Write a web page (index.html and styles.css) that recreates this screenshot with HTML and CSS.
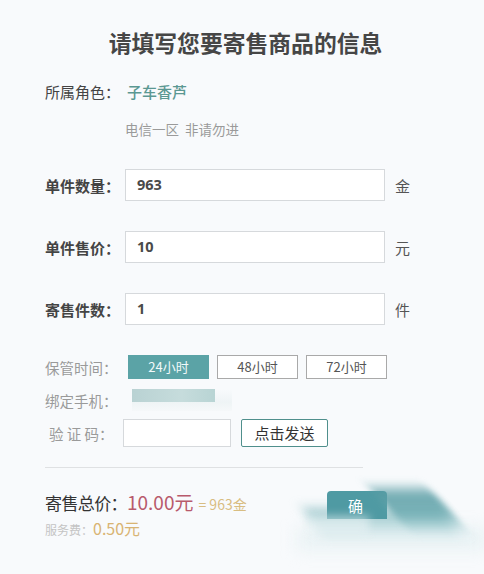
FILE: index.html
```html
<!DOCTYPE html>
<html lang="zh">
<head>
<meta charset="utf-8">
<link rel="stylesheet" href="styles.css">
</head>
<body>
<div class="page">
  <h1 class="title">请填写您要寄售商品的信息</h1>
  <div class="role"><span class="role-label">所属角色：</span><span class="role-name">子车香芦</span></div>
  <div class="server">电信一区&nbsp;&nbsp;非请勿进</div>

  <div class="field first"><span class="flabel">单件数量：</span><div class="finput">963</div><span class="unit">金</span></div>
  <div class="field"><span class="flabel">单件售价：</span><div class="finput">10</div><span class="unit">元</span></div>
  <div class="field"><span class="flabel">寄售件数：</span><div class="finput">1</div><span class="unit">件</span></div>

  <div class="hold">
    <span class="glabel">保管时间：</span>
    <div class="opts">
      <span class="opt active">24小时</span>
      <span class="opt">48小时</span>
      <span class="opt">72小时</span>
    </div>
  </div>
  <div class="bind">
    <span class="glabel">绑定手机：</span>
    <span class="phone"><span class="phone-blur"></span></span>
  </div>
  <div class="verify">
    <span class="vlabel">验 证 码：</span>
    <div class="vinput"></div>
    <span class="send">点击发送</span>
  </div>

  <div class="divider"></div>

  <div class="summary">
    <div class="totals">
      <div class="total"><span class="tlabel">寄售总价：</span><span class="price">10.00元</span><span class="gold">=&nbsp;963金</span></div>
      <div class="fee"><span class="flab">服务费：</span><span class="fval">0.50元</span></div>
    </div>
    <div class="confirm-wrap">
      <span class="smear s3"></span>
      <span class="smear s2"></span>
      <span class="confirm">确</span>
      <span class="smear s1"></span>
      <span class="smear s4"></span>
    </div>
  </div>
</div>
</body>
</html>
```

FILE: styles.css
```css
* { box-sizing: border-box; }
html, body { margin: 0; padding: 0; }
body {
  background: #f8fafc;
  font-family: "Noto Sans CJK SC", "Noto Sans", sans-serif;
  color: #444;
  width: 484px;
  height: 574px;
  overflow: hidden;
}
.page { padding-left: 45px; }

.title {
  margin: 28px 0 0 0;
  padding-right: 38px;
  height: 30px;
  line-height: 30px;
  font-size: 22.8px;
  font-weight: 700;
  text-align: center;
  color: #464646;
}

.role {
  margin-top: 22px;
  height: 24px;
  line-height: 24px;
  font-size: 15px;
  display: flex;
}
.role-label { width: 82px; color: #444; }
.role-name { color: #5b9892; font-weight: 500; }

.server {
  margin-top: 15px;
  padding-left: 80px;
  height: 20px;
  line-height: 20px;
  font-size: 13.5px;
  color: #9a9a9a;
}

.field {
  margin-top: 30px;
  height: 32px;
  display: flex;
  align-items: center;
}
.flabel {
  width: 80px;
  font-size: 15px;
  font-weight: 700;
  color: #444;
}
.finput {
  width: 260px;
  height: 32px;
  background: #fff;
  border: 1px solid #d6d9dc;
  padding-left: 11px;
  line-height: 30px;
  font-size: 14.5px;
  font-weight: 700;
  color: #4a4a4a;
  font-family: "Open Sans", "Noto Sans", sans-serif;
}
.unit {
  margin-left: 10px;
  font-size: 15px;
  color: #555;
}

.hold {
  margin-top: 30px;
  height: 24px;
  display: flex;
  align-items: center;
}
.glabel {
  width: 83px;
  font-size: 14.5px;
  color: #9a9a9a;
}
.opts { display: flex; gap: 8px; }
.opt {
  width: 81px;
  height: 24px;
  border: 1px solid #a9a9a9;
  background: #fff;
  text-align: center;
  line-height: 22px;
  font-size: 13px;
  color: #555;
}
.opt.active {
  background: #5ba3a6;
  border-color: #5ba3a6;
  color: #f2fafa;
}

.bind {
  margin-top: 11px;
  height: 20px;
  display: flex;
  align-items: center;
}
.bind .glabel { width: 87px; }
.phone {
  width: 100px;
  height: 22px;
  display: block;
  background: linear-gradient(180deg, rgba(230,240,240,0) 0%, rgba(232,240,241,0.6) 60%, rgba(240,244,245,0.3) 100%);
}
.phone-blur {
  display: block;
  width: 83px;
  height: 13px;
  background: linear-gradient(90deg, #b9d2d3 0%, #c6dcdc 60%, #b8d4d4 100%);
  filter: blur(0.6px);
}

.verify {
  margin-top: 9px;
  height: 28px;
  display: flex;
  align-items: center;
}
.vlabel {
  width: 78px;
  padding-left: 4px;
  font-size: 14.5px;
  color: #9a9a9a;
}
.vinput {
  width: 108px;
  height: 28px;
  background: #fff;
  border: 1px solid #d6d9dc;
}
.send {
  margin-left: 10px;
  width: 87px;
  height: 28px;
  border: 1px solid #4f8f8c;
  border-radius: 2px;
  background: #fff;
  text-align: center;
  line-height: 26px;
  font-size: 15px;
  color: #333;
}

.divider {
  margin-top: 20px;
  width: 318px;
  height: 1px;
  background: #dfe1e3;
}

.summary {
  display: flex;
  margin-top: 21px;
}
.totals { width: 282px; }
.total {
  height: 26px;
  line-height: 26px;
  display: flex;
  align-items: baseline;
  white-space: nowrap;
}
.tlabel { font-size: 17px; color: #333; width: 82px; letter-spacing: -0.6px; }
.price { font-size: 19px; color: #b85a6c; }
.gold { margin-left: 5px; font-size: 14px; color: #d8bd82; }
.fee {
  margin-top: 3px;
  height: 20px;
  line-height: 20px;
  display: flex;
  align-items: baseline;
  white-space: nowrap;
}
.flab { font-size: 12px; color: #c4c4c4; width: 48px; }
.fval { font-size: 16px; color: #d8b473; }

.confirm-wrap {
  position: relative;
  margin-top: 2px;
  width: 150px;
  height: 60px;
}
.confirm {
  position: absolute;
  left: 0;
  top: 0;
  width: 60px;
  height: 28px;
  background: #4f9aa3;
  border-radius: 4px 4px 0 0;
  color: #fff;
  font-size: 15px;
  padding-left: 21px;
  padding-top: 5px;
  line-height: 20px;
  z-index: 2;
}
.smear {
  position: absolute;
  display: block;
}
.s1 {
  z-index: 3;
  left: 38px;
  top: -8px;
  width: 60px;
  height: 52px;
  background: linear-gradient(180deg, rgba(100,165,170,0.15) 0%, rgba(88,156,164,0.85) 25%, rgba(100,166,172,0.8) 55%, rgba(160,205,210,0.4) 85%, rgba(220,236,238,0.1) 100%);
  filter: blur(4px);
  transform: skewX(42deg);
  transform-origin: top left;
}
.s2 {
  z-index: 1;
  left: -15px;
  top: 18px;
  width: 140px;
  height: 30px;
  background: linear-gradient(180deg, rgba(110,172,178,0.8) 0%, rgba(150,200,204,0.55) 50%, rgba(230,242,243,0.1) 100%);
  filter: blur(6px);
  transform: skewX(30deg);
}
.s3 {
  z-index: 1;
  left: -30px;
  top: 36px;
  width: 190px;
  height: 24px;
  background: rgba(225,238,240,0.6);
  filter: blur(8px);
}
.s4 {
  z-index: 4;
  left: -18px;
  top: 25px;
  width: 60px;
  height: 18px;
  background: rgba(235,244,245,0.6);
  filter: blur(5px);
}
```
